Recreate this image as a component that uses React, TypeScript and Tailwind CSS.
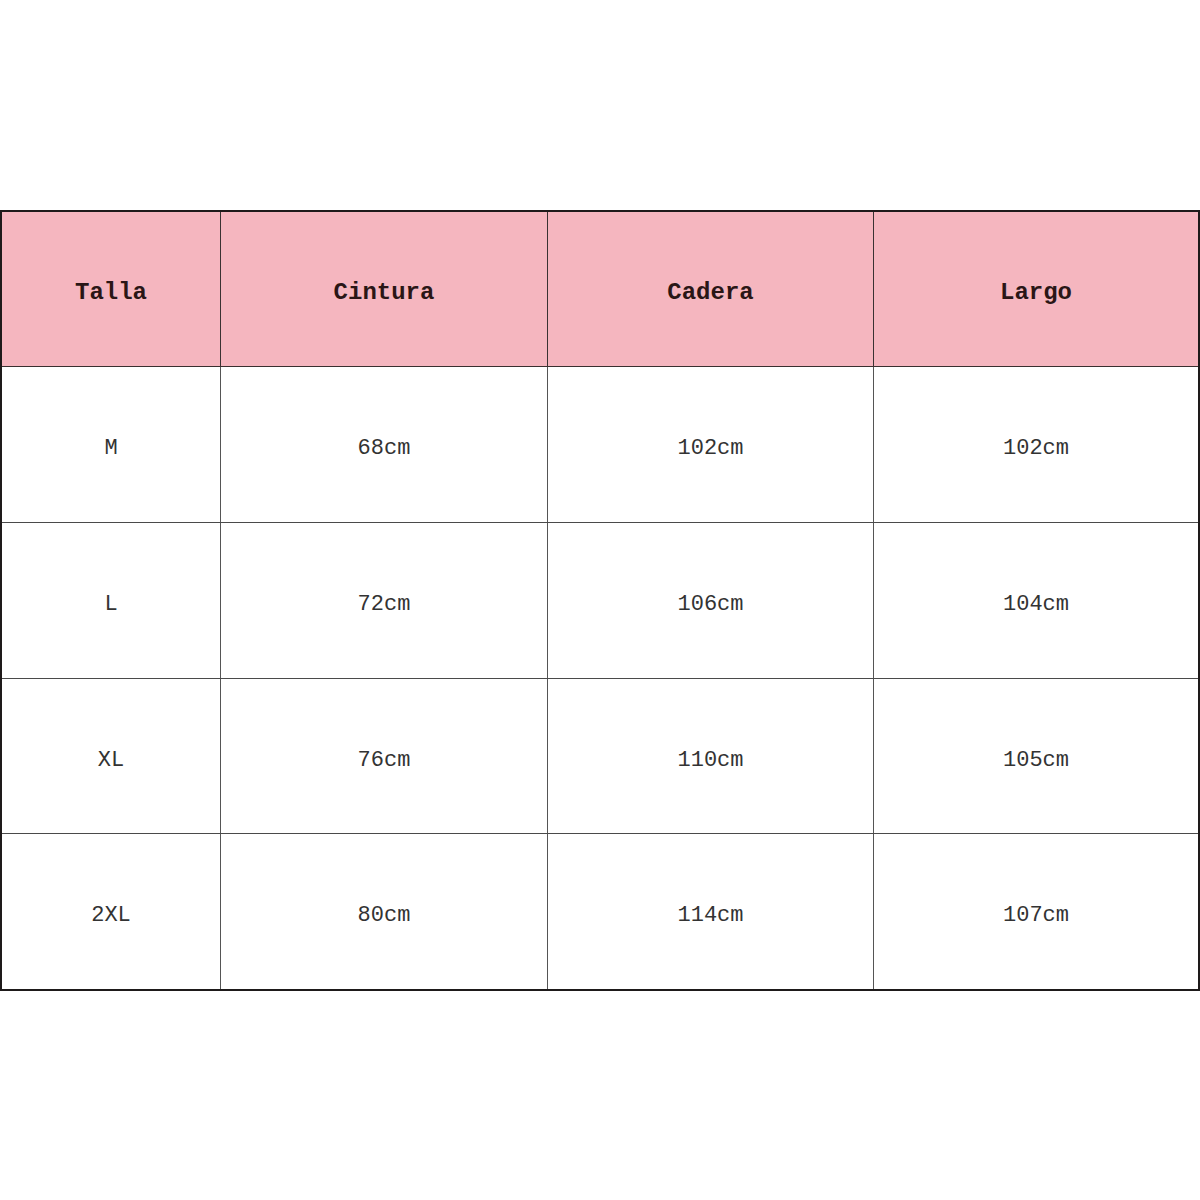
const headers = ['Talla', 'Cintura', 'Cadera', 'Largo'];

const rows = [
  { talla: 'M', cintura: '68cm', cadera: '102cm', largo: '102cm', h: 'h-[156px]' },
  { talla: 'L', cintura: '72cm', cadera: '106cm', largo: '104cm', h: 'h-[156px]' },
  { talla: 'XL', cintura: '76cm', cadera: '110cm', largo: '105cm', h: 'h-[155px]' },
  { talla: '2XL', cintura: '80cm', cadera: '114cm', largo: '107cm', h: 'h-[155px]' },
];

const cols = 'grid grid-cols-[219px_327px_326px_1fr]';

export default function App() {
  return (
    <div className="w-[1200px] h-[1200px] bg-white pt-[210px] font-['Liberation_Mono',monospace]">
      <div className="w-[1200px] border-2 border-[#1e1a1a]">
        <div className={`${cols} h-[155px] bg-[#f5b6bf] border-b border-[#3a3030]`}>
          {headers.map((h, i) => (
            <div
              key={h}
              className={`flex items-center justify-center pt-[7px] text-[24px] font-bold text-[#2a1616] ${i < 3 ? 'border-r border-[#3a3232]' : ''}`}
            >
              {h}
            </div>
          ))}
        </div>
        {rows.map((r, ri) => (
          <div
            key={r.talla}
            className={`${cols} ${r.h} ${ri < rows.length - 1 ? 'border-b border-[#4a4a4a]' : ''}`}
          >
            {[r.talla, r.cintura, r.cadera, r.largo].map((v, i) => (
              <div
                key={i}
                className={`flex items-center justify-center pt-[8px] text-[22px] text-[#333] ${i < 3 ? 'border-r border-[#555]' : ''}`}
              >
                {v}
              </div>
            ))}
          </div>
        ))}
      </div>
    </div>
  );
}
